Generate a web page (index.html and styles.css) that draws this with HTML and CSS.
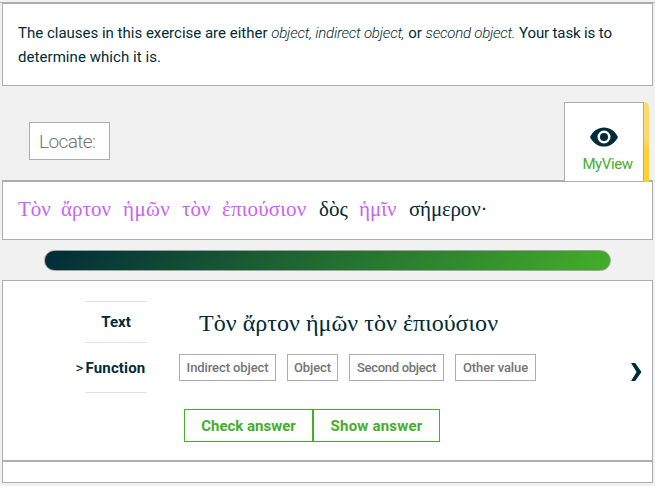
FILE: index.html
```
<!DOCTYPE html>
<html lang="en">
<head>
<meta charset="utf-8">
<title>Exercise</title>
<link rel="stylesheet" href="styles.css">
</head>
<body>
<main class="page">
  <section class="panel intro">
    <p><span class="s1">The clauses in this exercise are either</span> <em class="s2">object, indirect object,</em> <span class="s3">or</span> <em class="s4">second object.</em> <span class="s5">Your task is to</span><br><span class="s6">determine which it is.</span></p>
  </section>
  <header class="toolbar">
    <div class="locate">Locate:</div>
    <div class="myview">
      <svg width="28" height="20" viewBox="0 0 28 20"><path fill="#002b38" fill-rule="evenodd" d="M0 10C3 3.8 8 .4 14 .4S25 3.8 28 10C25 16.2 20 19.6 14 19.6S3 16.2 0 10ZM14 3.5a6.5 6.5 0 1 0 0 13a6.5 6.5 0 1 0 0-13Z"/><circle cx="14" cy="10" r="4" fill="#002b38"/></svg>
      <span>MyView</span>
    </div>
  </header>
  <section class="panel verse" lang="el">
    <span class="hit w1">Τὸν</span><span class="hit w2">ἄρτον</span><span class="hit w3">ἡμῶν</span><span class="hit w4">τὸν</span><span class="hit w5">ἐπιούσιον</span><span class="w6">δὸς</span><span class="hit w7">ἡμῖν</span><span class="w8">σήμερον·</span>
  </section>
  <div class="progress"></div>
  <section class="panel question">
    <div class="labels">
      <div class="label text"><b>Text</b></div>
      <div class="label function"><i>&gt;</i><b>Function</b></div>
    </div>
    <div class="answers">
      <div class="phrase" lang="el">Τὸν ἄρτον ἡμῶν τὸν ἐπιούσιον</div>
      <div class="choices">
        <span class="c1">Indirect object</span><span class="c2">Object</span><span class="c3">Second object</span><span class="c4">Other value</span>
      </div>
      <div class="actions"><button class="check">Check answer</button><button class="show">Show answer</button></div>
    </div>
    <div class="next"><svg width="11" height="18" viewBox="0 0 11 18"><path fill="#002b38" d="M0 0H4.2L10.5 9L4.2 18H0L5.6 9Z"/></svg></div>
  </section>
  <section class="panel footer"></section>
</main>
</body>
</html>
```

FILE: styles.css
```
* { box-sizing: border-box; }
body {
  margin: 0;
  background: #f1f1f1;
  color: #002b38;
  font-family: Roboto, "Noto Sans", sans-serif;
}
.page {
  height: 486px;
  padding: 0 2px;
  border-top: 2px solid #f1f1f1;
  background: linear-gradient(#adadad, #adadad) 0 0 / 100% 1px no-repeat;
  overflow: hidden;
}
.panel { width: 651px; border: 1px solid #adadad; background: #fff; }
.intro { height: 83px; margin-top: 1px; padding: 17px 15px; }
.intro p { margin: 0; font-size: 15px; line-height: 24px; white-space: nowrap; }
.intro span, .intro em { display: inline-block; }
.intro em { font-weight: 300; }
.intro .s2 { letter-spacing: -0.22px; }
.intro .s4 { letter-spacing: -0.23px; }
.intro .s5 { letter-spacing: -0.13px; }
.intro .s6 { letter-spacing: 0.06px; }
.toolbar { display: flex; height: 94px; }
.locate {
  width: 81px;
  height: 38px;
  margin: 36px 0 0 27px;
  padding-left: 9px;
  border: 1px solid #adadad;
  background: #fff;
  color: #757575;
  font-size: 19px;
  font-weight: 300;
  letter-spacing: -0.6px;
  line-height: 37px;
}
.myview {
  position: relative;
  display: flex;
  flex-direction: column;
  align-items: center;
  width: 80px;
  height: 80px;
  margin: 16px 0 0 454px;
  padding-top: 24px;
  border: 1px solid #adadad;
  background: #fff;
  color: #44ae2a;
  font-size: 15px;
  line-height: 20px;
}
.myview::after {
  content: "";
  position: absolute;
  top: -1px;
  left: 79px;
  width: 5px;
  height: 80px;
  border-radius: 0 5px 0 0;
  background: linear-gradient(#ffd96a, #ffd96a 45%, #ffcf35 60%);
}
.myview span { margin: 7px 0 0 7px; letter-spacing: -0.4px; }
.verse {
  display: flex;
  height: 60px;
  padding: 12px 0 0 15px;
  border-top-width: 2px;
  font-family: "Liberation Serif", serif;
  font-size: 21px;
  line-height: 30px;
  white-space: nowrap;
}
.hit { color: #cb62f5; }
.w1 { width: 43px; } .w2 { width: 62px; } .w3 { width: 59px; letter-spacing: 0.4px; }
.w4 { width: 40px; } .w5 { width: 97px; letter-spacing: 0.15px; } .w6 { width: 40px; } .w7 { width: 50px; }
.w8 { letter-spacing: -0.2px; }
.progress {
  width: 567px;
  height: 21px;
  margin: 10px 0 9px 42px;
  border: 1px solid #a0a0a0;
  border-radius: 11px;
  background: linear-gradient(135deg, #002b38, #44ae2a);
}
.question { display: flex; height: 181px; }
.labels { width: 62px; margin: 20px 0 0 82px; font-size: 15px; }
.label { display: flex; justify-content: center; align-items: center; border-top: 1px solid #e0e0e0; white-space: nowrap; }
.text { height: 41px; }
.function { height: 51px; border-bottom: 1px solid #e0e0e0; letter-spacing: 0.15px; }
.label i { width: 10px; margin-left: -11px; font-style: normal; font-weight: 400; }
.answers { width: 400px; margin-left: 32px; }
.phrase { height: 73px; padding: 26px 0 0 20px; font: 24px/32px "Liberation Serif", serif; letter-spacing: 0.04px; white-space: nowrap; }
.choices { display: flex; gap: 11px; font-size: 13px; font-weight: 500; line-height: 25px; }
.choices span { height: 27px; border: 1px solid #adadad; color: #757575; letter-spacing: -0.1px; text-align: center; white-space: nowrap; }
.choices .c1 { width: 97px; } .choices .c2 { width: 51px; }
.choices .c3 { width: 95px; letter-spacing: -0.3px; } .choices .c4 { width: 81px; }
.actions { display: flex; margin: 28px 0 0 5px; }
button { height: 33px; padding: 1px 0 0; border: 1px solid #44ae2a; background: #fff; color: #44ae2a; font: bold 15px/30px Roboto, sans-serif; }
.check { width: 129px; }
.show { width: 127px; }
.show { letter-spacing: 0.2px; }
.next { margin: 82px 0 0 52px; }
.footer { height: 22px; }
```
